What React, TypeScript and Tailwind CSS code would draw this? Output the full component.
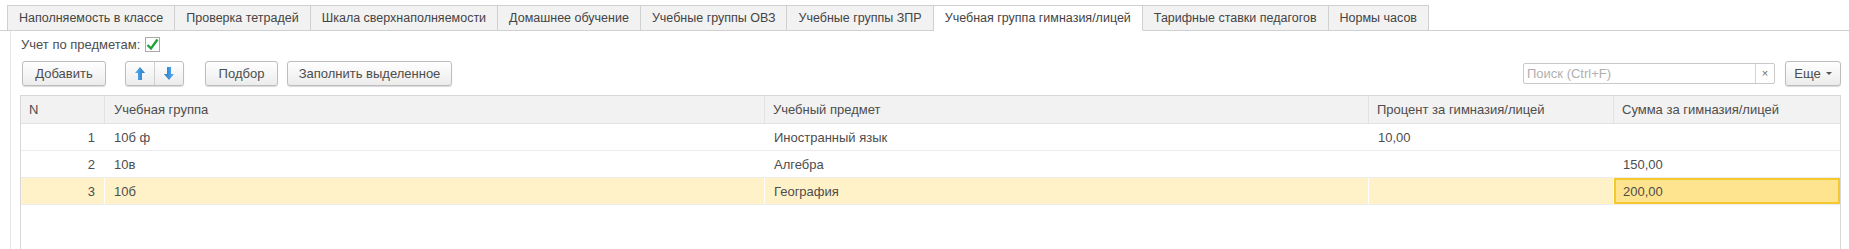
import React from "react";

const tabs = [
  "Наполняемость в классе",
  "Проверка тетрадей",
  "Шкала сверхнаполняемости",
  "Домашнее обучение",
  "Учебные группы ОВЗ",
  "Учебные группы ЗПР",
  "Учебная группа гимназия/лицей",
  "Тарифные ставки педагогов",
  "Нормы часов",
];

const rows = [
  { n: 1, g: "10б ф", s: "Иностранный язык", p: "10,00", sum: "" },
  { n: 2, g: "10в", s: "Алгебра", p: "", sum: "150,00" },
  { n: 3, g: "10б", s: "География", p: "", sum: "200,00" },
];

function Btn({ children, className = "" }: { children: React.ReactNode; className?: string }) {
  return (
    <div
      className={
        "h-[25px] flex items-center justify-center rounded-[3px] border border-[#bdbdbd] bg-gradient-to-b from-white to-[#ececec] shadow-[0_1px_1px_rgba(0,0,0,0.15)] text-[#4d4d4d] " +
        className
      }
    >
      {children}
    </div>
  );
}

function Arrow({ down = false }: { down?: boolean }) {
  return (
    <svg width="10" height="13" viewBox="0 0 10 13" className={down ? "rotate-180" : ""}>
      <defs>
        <linearGradient id={down ? "gd" : "gu"} x1="0" y1="0" x2="1" y2="0">
          <stop offset="0" stopColor="#5fb0f0" />
          <stop offset="1" stopColor="#1f78c8" />
        </linearGradient>
      </defs>
      <path d="M5 0 L10 6 H7 V13 H3 V6 H0 Z" fill={`url(#${down ? "gd" : "gu"})`} />
    </svg>
  );
}

export default function App() {
  return (
    <div className="w-[1849px] h-[249px] overflow-hidden bg-white font-['Liberation_Sans',Arial,sans-serif] text-[13px] text-[#4d4d4d] leading-none">
      {/* Tabs */}
      <div className="pt-[5px] pl-[7px] flex border-b border-[#d0d0d0]">
        {tabs.map((t, i) => {
          const active = i === 6;
          return (
            <div
              key={t}
              className={
                "h-[26px] -mb-px flex items-center px-[11px] text-[12.5px] text-[#444] border-t border-r border-[#d0d0d0] whitespace-nowrap " +
                (i === 0 ? "border-l " : "") +
                (active ? "bg-white border-b border-b-white" : "bg-[#f2f2f2] border-b border-b-[#d0d0d0]")
              }
            >
              {t}
            </div>
          );
        })}
      </div>

      {/* Body */}
      <div className="ml-[10px] border-l border-[#e6e6e6] pl-[9px] pr-[8px] h-[218px]">
        {/* checkbox row */}
        <div className="h-[30px] flex items-start pt-[6px] pl-px">
          <span className="leading-[15px]">Учет по предметам:</span>
          <div className="ml-[5px] w-[15px] h-[15px] border border-[#a9a9a9] bg-white flex items-center justify-center">
            <svg width="13" height="13" viewBox="0 0 13 13">
              <path d="M1.5 7 L5 10.5 L11.5 1.5" fill="none" stroke="#22a33a" strokeWidth="2.4" strokeLinejoin="miter" />
            </svg>
          </div>
        </div>

        {/* buttons */}
        <div className="h-[25px] flex items-center">
          <Btn className="ml-[2px] w-[84px]">Добавить</Btn>
          <div className="ml-[19px] w-[59px] h-[25px] flex rounded-[3px] border border-[#bdbdbd] bg-gradient-to-b from-white to-[#ececec] shadow-[0_1px_1px_rgba(0,0,0,0.15)]">
            <div className="flex-1 flex items-center justify-center border-r border-[#cfcfcf]">
              <Arrow />
            </div>
            <div className="flex-1 flex items-center justify-center">
              <Arrow down />
            </div>
          </div>
          <Btn className="ml-[21px] w-[73px]">Подбор</Btn>
          <Btn className="ml-[9px] w-[165px]">Заполнить выделенное</Btn>
          <div className="flex-1" />
          <div className="w-[252px] h-[21px] flex border border-[#c9c9c9] rounded-[2px] bg-white">
            <div className="flex-1 flex items-center pl-[3px] text-[#b0b0b0]">Поиск (Ctrl+F)</div>
            <div className="w-[19px] flex items-center justify-center border-l border-[#d4d4d4] text-[11px] text-[#6d6d6d]">×</div>
          </div>
          <Btn className="ml-[10px] w-[56px] h-[23px]">
            <span>Еще</span>
            <span className="ml-[5px] inline-block w-0 h-0 border-l-[3px] border-r-[3px] border-t-[3px] border-l-transparent border-r-transparent border-t-[#555]" />
          </Btn>
        </div>

        {/* table */}
        <div className="mt-[9px] border border-[#d8d8d8] h-[160px]">
          <div className="grid grid-cols-[84px_660px_604px_245px_1fr] h-[28px] bg-[#f2f2f2] border-b border-[#e2e2e2]">
            {["N", "Учебная группа", "Учебный предмет", "Процент за гимназия/лицей", "Сумма за гимназия/лицей"].map((h, i) => (
              <div
                key={h}
                className={"flex items-center pl-[8px] " + (i < 4 ? "border-r border-[#e2e2e2]" : "")}
              >
                {i === 1 ? <span className="pl-px">{h}</span> : h}
              </div>
            ))}
          </div>
          {rows.map((r, idx) => {
            const sel = idx === 2;
            return (
              <div
                key={r.n}
                className={
                  "grid grid-cols-[84px_660px_604px_245px_1fr] h-[27px] border-b border-[#ececec] " +
                  (sel ? "bg-[#fff2c8]" : "bg-white")
                }
              >
                <div className="flex items-center justify-end pr-[9px] pt-px border-r border-white">{r.n}</div>
                <div className="flex items-center pl-[9px] pt-px border-r border-white">{r.g}</div>
                <div className="flex items-center pl-[9px] pt-px border-r border-white">{r.s}</div>
                <div className="flex items-center pl-[9px] pt-px border-r border-white">{r.p}</div>
                {sel ? (
                  <div className="flex items-center pl-[7px] pt-px bg-[#fee48e] border-2 border-[#f6c830]">{r.sum}</div>
                ) : (
                  <div className="flex items-center pl-[9px] pt-px">{r.sum}</div>
                )}
              </div>
            );
          })}
        </div>
      </div>
    </div>
  );
}
